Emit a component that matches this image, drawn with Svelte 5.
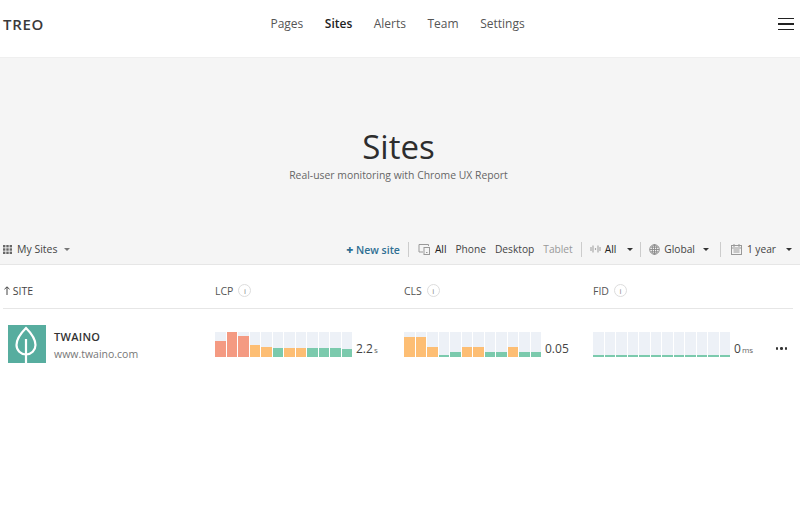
<script>
    const R = '#f49a82', O = '#fdbe74', G = '#7bcaad';

    const nav = [
        { label: 'Pages' },
        { label: 'Sites', active: true },
        { label: 'Alerts' },
        { label: 'Team' },
        { label: 'Settings' }
    ];

    const metrics = [
        { name: 'LCP', value: '2.2', unit: 's', bars: [[16, R], [25, R], [21, R], [12, O], [10, O], [9, G], [9, O], [9, O], [9, G], [9, G], [9, G], [8, G]] },
        { name: 'CLS', value: '0.05', unit: '', bars: [[20, O], [20, O], [10, O], [2, G], [5, G], [10, O], [10, O], [5, G], [5, G], [10, O], [5, G], [5, G]] },
        { name: 'FID', value: '0', unit: 'ms', bars: Array(12).fill([2, G]) }
    ];
</script>

<header class="topbar">
    <div class="logo">TREO</div>
    <nav>
        {#each nav as item}
            <span class:active={item.active}>{item.label}</span>
        {/each}
    </nav>
    <div class="burger"><i></i><i></i><i></i></div>
</header>

<section class="hero">
    <div class="hero-text">
        <h1>Sites</h1>
        <p>Real-user monitoring with Chrome UX Report</p>
    </div>
    <div class="toolbar">
        <div class="mysites">
            <svg width="9" height="9" viewBox="0 0 9 9" fill="#666">
                {#each [0, 3.3, 6.6] as y}
                    {#each [0, 3.3, 6.6] as x}
                        <rect {x} {y} width="2.4" height="2.4" />
                    {/each}
                {/each}
            </svg>
            <span>My Sites</span>
            <b class="caret small"></b>
        </div>
        <div class="filters">
            <span class="newsite"><b>+</b> New site</span>
            <i class="sep"></i>
            <svg class="dev" width="12" height="12" viewBox="0 0 12 12" fill="none" stroke="#999">
                <path d="M10.5 3V1.5h-9.5v7.5h4" />
                <rect x="6" y="4.5" width="5.5" height="7" fill="#f5f5f5" />
                <path d="M8 9.5h1.5" />
            </svg>
            <span class="opt strong">All</span>
            <span class="opt">Phone</span>
            <span class="opt">Desktop</span>
            <span class="opt dim">Tablet</span>
            <i class="sep"></i>
            <svg class="wave" width="11" height="10" viewBox="0 0 11 10" fill="none" stroke="#aaa" stroke-width="1.2">
                <path d="M1 3v4M3 1.5v7M5.5 4v2M8 1.5v7M10 3v4" />
            </svg>
            <span class="opt strong all-drop">All</span>
            <b class="caret"></b>
            <i class="sep tight"></i>
            <svg class="globe" width="11" height="11" viewBox="0 0 11 11" fill="none" stroke="#888" stroke-width="0.9">
                <circle cx="5.5" cy="5.5" r="4.8" />
                <ellipse cx="5.5" cy="5.5" rx="2.2" ry="4.8" />
                <path d="M5.5 .7v9.6M.7 5.5h9.6M1.4 3.2h8.2M1.4 7.8h8.2" />
            </svg>
            <span class="opt global">Global</span>
            <b class="caret"></b>
            <i class="sep wide"></i>
            <svg class="cal" width="11" height="11" viewBox="0 0 11 11" fill="none" stroke="#999">
                <rect x=".5" y="1.5" width="10" height="9" />
                <path d="M3 0v3M8 0v3M.5 4h10M2.5 6h6M2.5 8h6" />
            </svg>
            <span class="opt year">1 year</span>
            <b class="caret"></b>
        </div>
    </div>
</section>

<section class="table">
    <div class="thead">
        <div class="col-site">
            <svg width="6" height="9" viewBox="0 0 6 9" fill="none" stroke="#444"><path d="M3 9V1M.5 3.2 3 .8l2.5 2.4" /></svg>
            SITE
        </div>
        {#each metrics as m}
            <div class="col-metric">
                {m.name}
                <span class="info">i</span>
            </div>
        {/each}
    </div>
    <div class="row">
        <div class="col-site site">
            <div class="thumb">
                <svg width="38" height="38" viewBox="0 0 38 38" fill="none" stroke="#fff" stroke-width="2.2">
                    <path d="M18 3C12 9 8.5 14 8.5 20a9.5 9.5 0 0 0 19 0C27.5 14 24 9 18 3Z" />
                    <path d="M18 14V38" />
                </svg>
            </div>
            <div>
                <div class="name">TWAINO</div>
                <div class="url">www.twaino.com</div>
            </div>
        </div>
        {#each metrics as m}
            <div class="col-metric cell">
                <div class="chart">
                    {#each m.bars as [h, c]}
                        <div class="slot"><div class="bar" style="height:{h}px;background:{c}"></div></div>
                    {/each}
                </div>
                <div class="value">{m.value}<small>{m.unit}</small></div>
            </div>
        {/each}
        <div class="more"><i></i><i></i><i></i></div>
    </div>
</section>

<style>
    :global(body) {
        margin: 0;
        background: #fff;
        font-family: "Open Sans", "Noto Sans", sans-serif;
        color: #333;
        overflow: hidden;
    }

    .topbar {
        height: 57px;
        display: flex;
        align-items: center;
        justify-content: space-between;
        padding: 0 6px 10px 3px;
        box-sizing: border-box;
    }
    .logo { font-size: 15px; font-weight: 600; letter-spacing: .7px; color: #3a3a3a; }
    nav {
        display: flex;
        gap: 21.5px;
        font-size: 12px;
        color: #555;
        margin-right: 27px;
    }
    nav .active { font-weight: 600; color: #222; }
    .burger { display: flex; flex-direction: column; gap: 4px; margin-top: 1px; }
    .burger i { display: block; width: 16px; height: 1.5px; background: #222; }

    .hero {
        height: 206px;
        background: #f5f5f5;
        border-top: 1px solid #efefef;
        border-bottom: 1px solid #e6e6e6;
        display: flex;
        flex-direction: column;
    }
    .hero-text { flex: 1; text-align: center; padding-top: 66px; margin-left: -3px; }
    h1 { margin: 0; font-size: 33px; font-weight: 400; line-height: 45px; color: #2d2d2d; }
    .hero-text p { margin: 0; font-size: 10.4px; line-height: 12px; color: #666; }

    .toolbar {
        height: 30px;
        display: flex;
        align-items: center;
        justify-content: space-between;
        padding: 0 8px 0 3px;
        font-size: 10.5px;
        color: #444;
    }
    .mysites { display: flex; align-items: center; gap: 5px; }
    .filters { display: flex; align-items: center; gap: 5px; font-size: 10.2px; }
    .newsite { color: #2f6f93; font-weight: 600; font-size: 10.5px; }
    .newsite b { font-size: 12px; }
    .opt { margin-right: 4px; }
    .strong { color: #222; font-weight: 500; }
    .dim { color: #999; margin-right: 0; }
    .all-drop { margin-right: 6px; }
    .global { margin-right: 3px; }
    .year { margin-right: 5px; }
    .sep { width: 1px; height: 15px; background: #ccc; margin: 0 3px; }
    .sep.tight { margin-left: 2px; }
    .sep.wide { margin-left: 6px; }
    .dev { margin-left: 1px; }
    .wave, .globe { margin-right: -1px; }
    .cal { margin-left: 2px; }
    .caret {
        width: 0;
        height: 0;
        border: 3px solid transparent;
        border-top: 3.5px solid #333;
        border-bottom: 0;
    }
    .caret.small { border-top-color: #777; margin-left: 2px; }

    .table { padding: 0 0 0 3px; }
    .thead {
        height: 44px;
        padding-top: 8px;
        box-sizing: border-box;
        display: flex;
        align-items: center;
        font-size: 10.5px;
        color: #555;
        border-bottom: 1px solid #e6e6e6;
        margin-right: 7px;
    }
    .col-site { width: 212px; flex-shrink: 0; padding-left: 1px; box-sizing: border-box; }
    .col-metric { width: 189px; flex-shrink: 0; display: flex; align-items: center; gap: 5px; }
    .thead .col-site { color: #444; }
    .info {
        width: 11px;
        height: 11px;
        border: 1px solid #ddd;
        border-radius: 50%;
        font-size: 8px;
        line-height: 11px;
        text-align: center;
        color: #888;
    }

    .row { display: flex; height: 54px; align-items: flex-start; position: relative; }
    .site { display: flex; gap: 8px; padding: 16px 0 0 5px; }
    .thumb { width: 38px; height: 38px; background: #57ad9f; overflow: hidden; }
    .thumb svg { display: block; }
    .name { font-size: 11px; font-weight: 600; line-height: 14px; margin-top: 5px; color: #333; letter-spacing: .3px; }
    .url { font-size: 10.5px; line-height: 14px; margin-top: 3px; color: #777; }

    .cell { padding-top: 23px; gap: 4px; align-items: flex-end; }
    .chart { display: flex; gap: 1px; width: 137px; height: 25px; }
    .slot { flex: 1; background: #edf1f7; display: flex; align-items: flex-end; }
    .bar { width: 100%; }
    .value { font-size: 12px; line-height: 16px; color: #444; margin-bottom: -1px; }
    .value small { font-size: 8px; color: #666; margin-left: 1px; }

    .more { position: absolute; right: 13px; top: 38px; display: flex; gap: 2px; }
    .more i { width: 2.5px; height: 2.5px; border-radius: 50%; background: #333; }
</style>
